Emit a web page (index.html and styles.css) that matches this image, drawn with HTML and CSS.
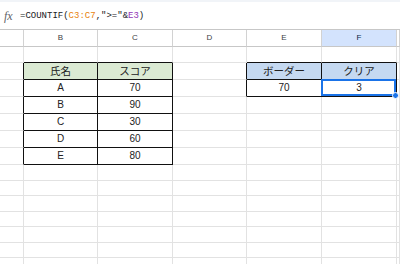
FILE: index.html
```html
<!DOCTYPE html>
<html>

<head>
    <meta charset="utf-8">
    <title>COUNTIF</title>

    <link rel="stylesheet" href="styles.css">
</head>

<body>

    <div class="formula-bar">
        <span class="fx">fx</span>
        <span class="formula">=COUNTIF(<span class="ref-a">C3:C7</span>,"&gt;="&amp;<span class="ref-b">E3</span>)</span>
    </div>

    <div class="sheet">
        <div class="row head">
            <div class="cell"></div>
            <div class="cell">B</div>
            <div class="cell">C</div>
            <div class="cell">D</div>
            <div class="cell">E</div>
            <div class="cell col-sel">F</div>
            <div class="cell"></div>
        </div>
        <div class="row r-16">
            <div class="cell"></div>
            <div class="cell above"></div>
            <div class="cell above"></div>
            <div class="cell"></div>
            <div class="cell above"></div>
            <div class="cell above"></div>
            <div class="cell"></div>
        </div>
        <div class="row">
            <div class="cell before"></div>
            <div class="cell tb green">氏名</div>
            <div class="cell tb green">スコア</div>
            <div class="cell before"></div>
            <div class="cell tb blue">ボーダー</div>
            <div class="cell tb blue">クリア</div>
            <div class="cell"></div>
        </div>
        <div class="row">
            <div class="cell before"></div>
            <div class="cell tb">A</div>
            <div class="cell tb">70</div>
            <div class="cell before"></div>
            <div class="cell tb">70</div>
            <div class="cell tb sel">3</div>
            <div class="cell"></div>
        </div>
        <div class="row">
            <div class="cell before"></div>
            <div class="cell tb">B</div>
            <div class="cell tb">90</div>
            <div class="cell"></div>
            <div class="cell"></div>
            <div class="cell"></div>
            <div class="cell"></div>
        </div>
        <div class="row">
            <div class="cell before"></div>
            <div class="cell tb">C</div>
            <div class="cell tb">30</div>
            <div class="cell"></div>
            <div class="cell"></div>
            <div class="cell"></div>
            <div class="cell"></div>
        </div>
        <div class="row">
            <div class="cell before"></div>
            <div class="cell tb">D</div>
            <div class="cell tb">60</div>
            <div class="cell"></div>
            <div class="cell"></div>
            <div class="cell"></div>
            <div class="cell"></div>
        </div>
        <div class="row">
            <div class="cell before"></div>
            <div class="cell tb">E</div>
            <div class="cell tb">80</div>
            <div class="cell"></div>
            <div class="cell"></div>
            <div class="cell"></div>
            <div class="cell"></div>
        </div>
        <div class="row r-16">
            <div class="cell"></div><div class="cell"></div><div class="cell"></div><div class="cell"></div><div class="cell"></div><div class="cell"></div><div class="cell"></div>
        </div>
        <div class="row r-15">
            <div class="cell"></div><div class="cell"></div><div class="cell"></div><div class="cell"></div><div class="cell"></div><div class="cell"></div><div class="cell"></div>
        </div>
        <div class="row r-16">
            <div class="cell"></div><div class="cell"></div><div class="cell"></div><div class="cell"></div><div class="cell"></div><div class="cell"></div><div class="cell"></div>
        </div>
        <div class="row r-15">
            <div class="cell"></div><div class="cell"></div><div class="cell"></div><div class="cell"></div><div class="cell"></div><div class="cell"></div><div class="cell"></div>
        </div>
        <div class="row r-16">
            <div class="cell"></div><div class="cell"></div><div class="cell"></div><div class="cell"></div><div class="cell"></div><div class="cell"></div><div class="cell"></div>
        </div>
        <div class="row r-15">
            <div class="cell"></div><div class="cell"></div><div class="cell"></div><div class="cell"></div><div class="cell"></div><div class="cell"></div><div class="cell"></div>
        </div>
        <div class="row r-16">
            <div class="cell"></div><div class="cell"></div><div class="cell"></div><div class="cell"></div><div class="cell"></div><div class="cell"></div><div class="cell"></div>
        </div>
    </div>

</body>

</html>
```

FILE: styles.css
```css
body {
    margin: 0;
    background: #fff;
    font-family: "Liberation Sans", "Noto Sans CJK JP", sans-serif;
    color: #222;
    overflow: hidden;
}

.formula-bar {
    height: 26px;
    border-top: 2px solid #f1f4f8;
    border-bottom: 1px solid #c7c7c7;
    display: flex;
    align-items: center;
    padding-left: 4px;
    padding-top: 1px;
    box-sizing: content-box;
}

.fx {
    font-family: "Liberation Serif", serif;
    font-style: italic;
    font-size: 12px;
    color: #5f6368;
    width: 16px;
}

.formula {
    font-family: "Liberation Mono", monospace;
    font-size: 9px;
    color: #202124;
}

.ref-a {
    color: #e8830f;
}

.ref-b {
    color: #9334b6;
}

.row {
    display: grid;
    grid-template-columns: 24px 74px 75px 74px 75px 75px 1fr;
    height: 17px;
}

.r-16 {
    height: 16px;
}

.r-15 {
    height: 15px;
}

.cell {
    box-sizing: border-box;
    border-right: 1px solid #e2e2e2;
    border-bottom: 1px solid #e2e2e2;
    font-size: 10px;
    line-height: 16px;
    text-align: center;
}

.head .cell {
    border-right-color: #d2d2d2;
    border-bottom-color: #c7c7c7;
    font-size: 8px;
    color: #3c4043;
}

.head .col-sel {
    background: #d3e3fd;
    color: #0b1f44;
}

.above {
    border-bottom-color: #111;
}

.before {
    border-right-color: #111;
}

.tb {
    border-right-color: #111;
    border-bottom-color: #111;
}

.green {
    background: #dbead3;
    font-size: 10.5px;
}

.blue {
    background: #c5d9f1;
    font-size: 10.5px;
}

.sel {
    position: relative;
}

.sel::before {
    content: "";
    position: absolute;
    left: -1px;
    top: -1px;
    right: 0;
    bottom: 0;
    border: 2px solid #1a73e8;
}

.sel::after {
    content: "";
    position: absolute;
    right: -3px;
    bottom: -3px;
    width: 5px;
    height: 5px;
    border-radius: 50%;
    background: #1a73e8;
    border: 1px solid #fff;
}
```
